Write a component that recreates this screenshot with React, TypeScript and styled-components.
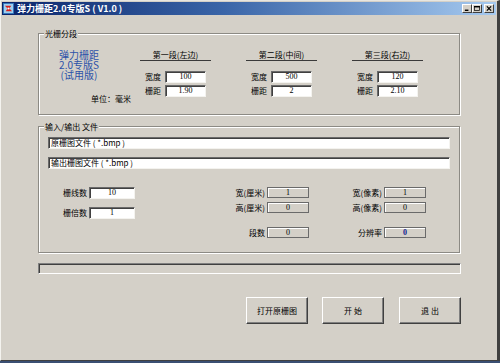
import React from 'react'
import styled, { createGlobalStyle } from 'styled-components'

const GlobalStyle = createGlobalStyle`
    html, body {
        margin: 0;
        padding: 0;
        background: #3a4f73;
    }
    * {
        box-sizing: border-box;
    }
`

const FONT = `"Noto Sans CJK SC", "Liberation Sans", sans-serif`
const NUM_FONT = `"Liberation Serif", "Noto Sans CJK SC", serif`

const segments = [
    { title: '第一段(左边)', width: '100', pitch: '1.90' },
    { title: '第二段(中间)', width: '500', pitch: '2' },
    { title: '第三段(右边)', width: '120', pitch: '2.10' },
]

export default function App() {
    return (
        <>
            <GlobalStyle />
            <Window>
                <TitleBar>
                    <AppIcon />
                    <Title>弹力栅距2.0专版S ( V1.0 )</Title>
                    <CaptionButtons>
                        <CaptionButton>
                            <MinGlyph />
                        </CaptionButton>
                        <CaptionButton>
                            <MaxGlyph />
                        </CaptionButton>
                        <CaptionButton $close>
                            <CloseGlyph />
                        </CaptionButton>
                    </CaptionButtons>
                </TitleBar>

                <Content>
                    <Group $height={82}>
                        <Legend>光栅分段</Legend>
                        <SegmentArea>
                            <Brand>
                                <BrandText>
                                    <BrandLine>弹力栅距</BrandLine>
                                    <BrandLine>2.0专版S</BrandLine>
                                    <BrandLine>(试用版)</BrandLine>
                                </BrandText>
                                <Unit>单位：毫米</Unit>
                            </Brand>
                            {segments.map((s) => (
                                <Segment key={s.title}>
                                    <SegmentTitle>{s.title}</SegmentTitle>
                                    <SegmentRow>
                                        <SmallLabel>宽度</SmallLabel>
                                        <Input $width={41}>{s.width}</Input>
                                    </SegmentRow>
                                    <SegmentRow>
                                        <SmallLabel>栅距</SmallLabel>
                                        <Input $width={41}>{s.pitch}</Input>
                                    </SegmentRow>
                                </Segment>
                            ))}
                        </SegmentArea>
                    </Group>

                    <Group $height={127} $gap={11}>
                        <Legend>输入/输出 文件</Legend>
                        <FileArea>
                            <FileInput>原栅图文件 ( *.bmp )</FileInput>
                            <FileInput>输出栅图文件 ( *.bmp )</FileInput>
                            <Fields>
                                <LeftCol>
                                    <Field>
                                        <FieldLabel $width={26} $align="left">栅线数</FieldLabel>
                                        <Input $width={46}>10</Input>
                                    </Field>
                                    <Field>
                                        <FieldLabel $width={26} $align="left">栅倍数</FieldLabel>
                                        <Input $width={46}>1</Input>
                                    </Field>
                                </LeftCol>
                                <MidCol>
                                    <Field>
                                        <FieldLabel $width={42}>宽(厘米)</FieldLabel>
                                        <ReadBox>1</ReadBox>
                                    </Field>
                                    <Field>
                                        <FieldLabel $width={42}>高(厘米)</FieldLabel>
                                        <ReadBox>0</ReadBox>
                                    </Field>
                                    <Field $spaced>
                                        <FieldLabel $width={42}>段数</FieldLabel>
                                        <ReadBox>0</ReadBox>
                                    </Field>
                                </MidCol>
                                <MidCol>
                                    <Field>
                                        <FieldLabel $width={43}>宽(像素)</FieldLabel>
                                        <ReadBox>1</ReadBox>
                                    </Field>
                                    <Field>
                                        <FieldLabel $width={43}>高(像素)</FieldLabel>
                                        <ReadBox>0</ReadBox>
                                    </Field>
                                    <Field $spaced>
                                        <FieldLabel $width={43}>分辨率</FieldLabel>
                                        <ReadBox $accent>0</ReadBox>
                                    </Field>
                                </MidCol>
                            </Fields>
                        </FileArea>
                    </Group>

                    <Progress />

                    <Buttons>
                        <Button>打开原栅图</Button>
                        <Button>开 始</Button>
                        <Button $gap={15}>退 出</Button>
                    </Buttons>
                </Content>
            </Window>
        </>
    )
}

const AppIcon = () => (
    <IconSvg viewBox="0 0 12 12">
        <rect x="0" y="0" width="12" height="12" fill="#2a6fb8" />
        <rect x="1" y="1" width="10" height="10" fill="#9fd0f0" />
        <path d="M2 3 L9 3 L7 6 L10 9 L3 9 L5 6 Z" fill="#d8201c" />
        <rect x="5" y="5" width="2" height="2" fill="#fff" />
    </IconSvg>
)

const MinGlyph = () => (
    <svg width="8" height="7" viewBox="0 0 8 7">
        <rect x="1" y="5" width="5" height="2" fill="#000" />
    </svg>
)

const MaxGlyph = () => (
    <svg width="8" height="7" viewBox="0 0 8 7">
        <rect x="0.5" y="0.5" width="7" height="6" fill="none" stroke="#000" />
        <rect x="0" y="0" width="8" height="2" fill="#000" />
    </svg>
)

const CloseGlyph = () => (
    <svg width="8" height="7" viewBox="0 0 8 7">
        <path d="M1 0.5 L7 6.5 M7 0.5 L1 6.5" stroke="#000" strokeWidth="1.6" />
    </svg>
)

const Window = styled.div`
    width: 500px;
    height: 361px;
    background: #d4d0c8;
    border-top: 1px solid #e8e6e0;
    border-left: 1px solid #f4f3ef;
    border-right: 3px solid #404040;
    border-bottom: 1px solid #404040;
    padding: 1px 1px 0 1px;
    display: flex;
    flex-direction: column;
    font-family: ${FONT};
    color: #000;
`

const TitleBar = styled.div`
    height: 13px;
    display: flex;
    align-items: center;
    gap: 3px;
    padding: 0 2px 0 1px;
    background: linear-gradient(to right, #0a246a 0%, #3a65a8 45%, #a6caf0 100%);
`

const IconSvg = styled.svg`
    width: 11px;
    height: 11px;
    flex: none;
`

const Title = styled.span`
    color: #fff;
    font-size: 9px;
    font-weight: 700;
    line-height: 12px;
    white-space: nowrap;
`

const CaptionButtons = styled.div`
    margin-left: auto;
    display: flex;
    align-items: center;
`

const CaptionButton = styled.div<{ $close?: boolean }>`
    width: 10px;
    height: 9px;
    margin-left: ${(p) => (p.$close ? '2px' : '0')};
    background: #d4d0c8;
    border-top: 1px solid #fff;
    border-left: 1px solid #fff;
    border-right: 1px solid #404040;
    border-bottom: 1px solid #404040;
    display: flex;
    align-items: center;
    justify-content: center;

    svg {
        width: 6px;
        height: 5px;
    }
`

const Content = styled.div`
    display: flex;
    flex-direction: column;
    padding: 18px 0 0 36px;
`

const Group = styled.div<{ $height: number; $gap?: number }>`
    position: relative;
    width: 422px;
    height: ${(p) => p.$height}px;
    margin-top: ${(p) => p.$gap ?? 0}px;
    border: 1px solid #8c8a84;
    box-shadow: inset 1px 1px 0 #fff, 1px 1px 0 #fff;
`

const Legend = styled.span`
    position: absolute;
    top: -6px;
    left: 5px;
    padding: 0 1px;
    background: #d4d0c8;
    font-size: 8px;
    line-height: 11px;
    white-space: nowrap;
`

const SegmentArea = styled.div`
    display: flex;
    height: 100%;
    gap: 35px;
`

const Brand = styled.div`
    width: 66px;
    flex: none;
    display: flex;
    flex-direction: column;
`

const BrandText = styled.div`
    margin: 16px 0 0 17px;
    width: 46px;
    display: flex;
    flex-direction: column;
    align-items: center;
    color: #2d52a8;
    font-size: 10px;
`

const BrandLine = styled.span`
    height: 10px;
    line-height: 10px;
    white-space: nowrap;
`

const Unit = styled.div`
    margin-top: 14px;
    align-self: flex-end;
    margin-right: -26px;
    font-size: 8px;
    line-height: 10px;
    white-space: nowrap;
`

const Segment = styled.div`
    width: 71px;
    flex: none;
    padding-top: 16px;
    display: flex;
    flex-direction: column;
`

const SegmentTitle = styled.div`
    height: 11px;
    text-align: center;
    font-size: 8px;
    line-height: 10px;
    border-bottom: 1px solid #3a3a3a;
    margin-bottom: 10px;
    white-space: nowrap;
`

const SegmentRow = styled.div`
    display: flex;
    align-items: center;
    padding-left: 5px;
    margin-bottom: 2px;
`

const SmallLabel = styled.span`
    width: 20px;
    font-size: 8px;
    line-height: 12px;
    white-space: nowrap;
`

const Input = styled.div<{ $width: number }>`
    width: ${(p) => p.$width}px;
    height: 12px;
    flex: none;
    background: #fff;
    border-top: 1px solid #6a6a6a;
    border-left: 1px solid #6a6a6a;
    border-right: 1px solid #f4f3ef;
    border-bottom: 1px solid #f4f3ef;
    box-shadow: inset 1px 1px 0 #404040;
    font-family: ${NUM_FONT};
    font-size: 8px;
    line-height: 10px;
    text-align: center;
`

const FileArea = styled.div`
    padding: 10px 9px 0 9px;
    display: flex;
    flex-direction: column;
    gap: 8px;
`

const FileInput = styled.div`
    height: 12px;
    background: #fff;
    border-top: 1px solid #6a6a6a;
    border-left: 1px solid #6a6a6a;
    border-right: 1px solid #f4f3ef;
    border-bottom: 1px solid #f4f3ef;
    box-shadow: inset 1px 1px 0 #404040;
    padding-left: 2px;
    font-size: 8px;
    line-height: 10px;
    white-space: nowrap;
`

const Fields = styled.div`
    display: flex;
    margin-top: 10px;
    padding-left: 15px;
`

const LeftCol = styled.div`
    width: 162px;
    flex: none;
    display: flex;
    flex-direction: column;
    gap: 9px;
`

const MidCol = styled.div`
    width: 116px;
    flex: none;
    display: flex;
    flex-direction: column;
    gap: 4px;
`

const Field = styled.div<{ $spaced?: boolean }>`
    display: flex;
    align-items: center;
    height: 11px;
    margin-top: ${(p) => (p.$spaced ? '10px' : '0')};
`

const FieldLabel = styled.span<{ $width: number; $align?: 'left' | 'right' }>`
    width: ${(p) => p.$width}px;
    flex: none;
    padding-right: 2px;
    text-align: ${(p) => p.$align ?? 'right'};
    font-size: 8px;
    line-height: 11px;
    white-space: nowrap;
`

const ReadBox = styled.div<{ $accent?: boolean }>`
    width: 42px;
    height: 11px;
    flex: none;
    background: #d4d0c8;
    border: 1px solid #6a6a6a;
    box-shadow: inset 1px 1px 0 #fff;
    font-family: ${NUM_FONT};
    font-size: 8px;
    line-height: 9px;
    text-align: center;
    color: ${(p) => (p.$accent ? '#10238f' : '#000')};
    font-weight: ${(p) => (p.$accent ? 700 : 400)};
`

const Progress = styled.div`
    width: 423px;
    height: 11px;
    margin-top: 10px;
    border-top: 1px solid #808080;
    border-left: 1px solid #808080;
    border-right: 1px solid #fff;
    border-bottom: 1px solid #fff;
    box-shadow: inset 1px 1px 0 #404040;
`

const Buttons = styled.div`
    width: 423px;
    margin-top: 23px;
    display: flex;
    justify-content: flex-end;
`

const Button = styled.div<{ $gap?: number }>`
    width: 62px;
    height: 27px;
    margin-left: ${(p) => p.$gap ?? 14}px;
    display: flex;
    align-items: center;
    justify-content: center;
    background: #d4d0c8;
    border-top: 1px solid #fff;
    border-left: 1px solid #fff;
    border-right: 1px solid #404040;
    border-bottom: 1px solid #404040;
    box-shadow: inset -1px -1px 0 #808080;
    font-size: 8px;
    white-space: nowrap;
`
